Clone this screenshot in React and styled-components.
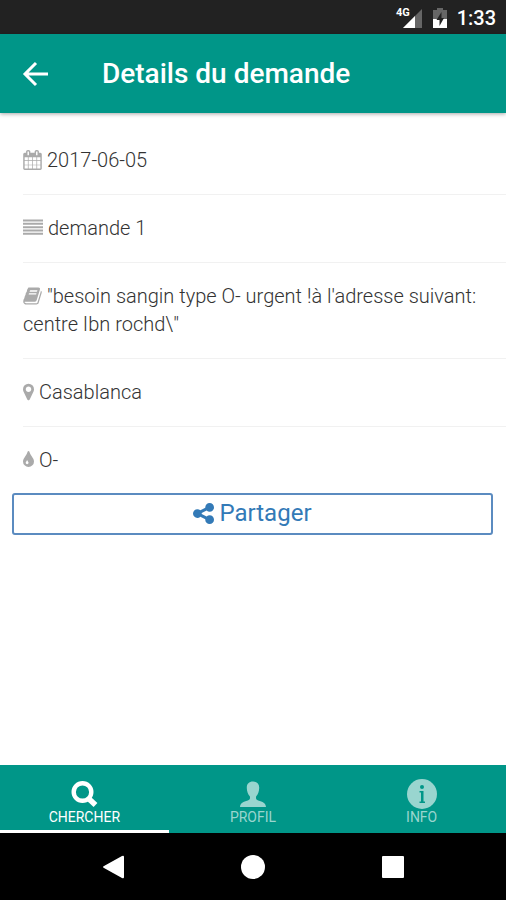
import styled, { createGlobalStyle } from "styled-components"

const GlobalStyle=createGlobalStyle`
*{
box-sizing:border-box;
}
body{
margin:0;
background:#fff;
font-family:Roboto,"Liberation Sans",sans-serif;
}
button{
font-family:inherit;
cursor:pointer;
}
`

const Screen=styled.div`
display:flex;
flex-direction:column;
min-height:100vh;
`

const StatusBar=styled.div`
display:flex;
align-items:center;
justify-content:flex-end;
height:34px;
padding:2px 10px 0;
background:#222;
color:#fff;
`

const Network=styled.svg`
width:28px;
height:24px;
margin-right:10px;
`

const Battery=styled.svg`
width:14px;
height:22px;
margin-right:10px;
`

const Clock=styled.time`
font-size:20px;
font-weight:500;
line-height:24px;
`

const Header=styled.header`
display:flex;
align-items:center;
gap:50px;
height:79px;
padding:0 20px;
background:#009688;
color:#fff;
box-shadow:0 1px 4px rgba(0,0,0,0.35);
`

const BackButton=styled.button`
display:flex;
width:32px;
height:32px;
padding:0;
border:0;
background:none;
color:inherit;
`

const Title=styled.h1`
margin:0;
font-size:28px;
font-weight:500;
line-height:32px;
`

const Content=styled.main`
flex:1;
padding-top:14px;
`

const List=styled.ul`
margin:0;
padding:0 0 0 23px;
list-style:none;
`

const Item=styled.li`
padding:19px 16px 20px 0;
border-bottom:1px solid #f1f1f1;
color:#333;
font-size:20px;
font-weight:300;
line-height:28px;
&:last-child{
padding-bottom:19px;
border-bottom:0;
}
`

const Glyph=styled.svg`
width:${({$width})=>$width}px;
height:${({$height})=>$height||20}px;
margin-right:5px;
vertical-align:-3px;
fill:${({$color})=>$color||"#aaa"};
`

const ShareButton=styled.button`
display:flex;
align-items:center;
justify-content:center;
width:calc(100% - 25px);
height:42px;
margin:0 13px 24px 12px;
padding:0 0 2px;
border:2px solid #5b8bc0;
border-radius:3px;
background:#fff;
color:#337ab7;
font-size:24px;
line-height:36px;
`

const Tabs=styled.nav`
display:grid;
grid-template-columns:repeat(3,1fr);
height:68px;
background:#009688;
`

const Tab=styled.button`
display:flex;
flex-direction:column;
align-items:center;
padding:14px 0 0;
border:0;
border-bottom:3px solid ${({$active})=>$active?"#fff":"transparent"};
background:none;
color:${({$active})=>$active?"#fff":"#99d5cf"};
font-size:14px;
line-height:16px;
svg{
width:32px;
height:30px;
}
`

const NavBar=styled.div`
display:flex;
justify-content:center;
gap:108px;
height:67px;
background:#000;
`

const NavButton=styled.button`
display:flex;
align-items:center;
justify-content:center;
width:32px;
padding:0;
border:0;
background:none;
svg{
width:28px;
height:28px;
fill:#fff;
}
`

const icons={
    calendar:{
        box:"64 0 1664 1792",
        width:19,
        path:"M192 1664h288v-288h-288v288zm352 0h320v-288h-320v288zm-352-352h288v-320h-288v320zm352 0h320v-320h-320v320zm-352-384h288v-288h-288v288zm736 736h320v-288h-320v288zm-384-736h320v-288h-320v288zm768 736h288v-288h-288v288zm-384-352h320v-320h-320v320zm-352-864v-288q0-13-9.5-22.5t-22.5-9.5h-64q-13 0-22.5 9.5t-9.5 22.5v288q0 13 9.5 22.5t22.5 9.5h64q13 0 22.5-9.5t9.5-22.5zm736 864h288v-320h-288v320zm-384-384h320v-288h-320v288zm384 0h288v-288h-288v288zm32-480v-288q0-13-9.5-22.5t-22.5-9.5h-64q-13 0-22.5 9.5t-9.5 22.5v288q0 13 9.5 22.5t22.5 9.5h64q13 0 22.5-9.5t9.5-22.5zm384-64v1280q0 52-38 90t-90 38h-1408q-52 0-90-38t-38-90v-1280q0-52 38-90t90-38h128v-96q0-66 47-113t113-47h64q66 0 113 47t47 113v96h384v-96q0-66 47-113t113-47h64q66 0 113 47t47 113v96h128q52 0 90 38t38 90z",
    },
    lines:{
        box:"0 0 1792 1792",
        width:20,
        path:"M0 130h1792v180h-1792zM0 430h1792v180h-1792zM0 730h1792v180h-1792zM0 1030h1792v180h-1792zM0 1330h1792v180h-1792z",
    },
    book:{
        box:"60 0 1672 1792",
        width:19,
        path:"M1703 478q40 57 18 129l-275 906q-19 64-76.5 107.5t-122.5 43.5h-923q-77 0-148.5-53.5t-99.5-131.5q-24-67-2-127 0-4 3-27t4-37q1-8-3-21.5t-3-19.5q2-11 8-21t16.5-23.5 16.5-23.5q23-38 45-91.5t30-91.5q3-10 .5-30t-.5-28q3-11 17-28t17-23q21-36 42-92t25-90q1-9-2.5-32t.5-28q4-13 22-30.5t22-22.5q19-26 42.5-84.5t27.5-96.5q1-8-3-25.5t-2-26.5q2-8 9-18t18-23 17-21q8-12 16.5-30.5t15-35 16-36 19.5-32 26.5-23.5 36-11.5 47.5 5.5l-1 3q38-9 51-9h761q74 0 114 56t18 130l-274 906q-36 119-71.5 153.5t-128.5 34.5h-869q-27 0-38 15-11 16-1 43 24 70 144 70h923q29 0 56-15.5t35-41.5l300-987q7-22 5-57 38 15 59 43zm-1064 2q-4 13 2 22.5t20 9.5h608q13 0 25.5-9.5t16.5-22.5l21-64q4-13-2-22.5t-20-9.5h-608q-13 0-25.5 9.5t-16.5 22.5zm-83 256q-4 13 2 22.5t20 9.5h608q13 0 25.5-9.5t16.5-22.5l21-64q4-13-2-22.5t-20-9.5h-608q-13 0-25.5 9.5t-16.5 22.5z",
    },
    marker:{
        box:"384 0 1024 1792",
        width:11,
        path:"M1152 640q0-106-75-181t-181-75-181 75-75 181 75 181 181 75 181-75 75-181zm256 0q0 109-33 179l-364 774q-16 33-47.5 52t-67.5 19-67.5-19-46.5-52l-365-774q-33-70-33-179 0-212 150-362t362-150 362 150 150 362z",
    },
    drop:{
        box:"384 0 1024 1792",
        width:11,
        path:"M896 1152q0-36-20-69-1-1-15.5-22.5t-25.5-38-25-44-21-50.5q-4-16-21-16t-21 16q-7 23-21 50.5t-25 44-25.5 38-15.5 22.5q-20 33-20 69 0 53 37.5 90.5t90.5 37.5 90.5-37.5 37.5-90.5zm512-128q0 212-150 362t-362 150-362-150-150-362q0-145 81-275 6-9 62.5-90.5t101-151 99.5-178 83-201.5q9-30 34-47t51-17 51.5 17 33.5 47q28 93 83 201.5t99.5 178 101 151 62.5 90.5q81 127 81 275z",
    },
    share:{
        box:"128 128 1536 1536",
        width:21,
        height:21,
        path:"M1344 1024q133 0 226.5 93.5t93.5 226.5-93.5 226.5-226.5 93.5-226.5-93.5-93.5-226.5q0-12 2-34l-360-180q-92 86-218 86-133 0-226.5-93.5t-93.5-226.5 93.5-226.5 226.5-93.5q126 0 218 86l360-180q-2-22-2-34 0-133 93.5-226.5t226.5-93.5 226.5 93.5 93.5 226.5-93.5 226.5-226.5 93.5q-126 0-218-86l-360 180q2 22 2 34t-2 34l360 180q92-86 218-86z",
    },
}

const details=[
    {icon:"calendar",text:"2017-06-05"},
    {icon:"lines",text:"demande 1"},
    {icon:"book",text:"\"besoin sangin type O- urgent !à l'adresse suivant: centre Ibn rochd\\\""},
    {icon:"marker",text:"Casablanca"},
    {icon:"drop",text:"O-"},
]

const Icon=({name,color})=>{
    const {box,width,height,path}=icons[name]
    return(
        <Glyph viewBox={box} $width={width} $height={height} $color={color} aria-hidden="true">
            <path d={path}/>
        </Glyph>
    )
}

const SearchIcon=()=>(
    <svg viewBox="0 0 32 30" aria-hidden="true">
        <circle cx="14.5" cy="13" r="8.8" fill="none" stroke="currentColor" strokeWidth="4.4"/>
        <path d="M20.5 19.5L27.5 26" stroke="currentColor" strokeWidth="5.6"/>
    </svg>
)

const PersonIcon=()=>(
    <svg viewBox="0 0 32 30" fill="currentColor" aria-hidden="true">
        <path d="M16 2.5C11.8 2.5 9.6 5.2 9.8 9C9.9 12.6 11 15.5 12.8 17.3C13.4 19.4 12.8 20.7 10.8 21.4C6.4 22.8 3.2 23.8 3 28H29C28.8 23.8 25.6 22.8 21.2 21.4C19.2 20.7 18.6 19.4 19.2 17.3C21 15.5 22.1 12.6 22.2 9C22.4 5.2 20.2 2.5 16 2.5Z"/>
    </svg>
)

const InfoIcon=()=>(
    <svg viewBox="0 0 32 30" aria-hidden="true">
        <circle cx="16" cy="15" r="15" fill="currentColor"/>
        <circle cx="16" cy="8" r="2" fill="#009688"/>
        <path d="M13.5 12H17.5V22.5H19V24H13.5V22.5H15V13.5H13.5Z" fill="#009688"/>
    </svg>
)

const App=()=>{
    return(
        <Screen>
            <GlobalStyle/>
            <StatusBar>
                <Network viewBox="0 0 28 24" role="img" aria-label="4G">
                    <path d="M27 3V22H8Z" fill="#666"/>
                    <path d="M20 10V22H8Z" fill="#fff"/>
                    <text x="1" y="10" fill="#fff" stroke="#222" strokeWidth="2" paintOrder="stroke" fontSize="11" fontWeight="700">4G</text>
                </Network>
                <Battery viewBox="0 0 14 22" aria-hidden="true">
                    <path d="M4 1H10V3H14V12H0V3H4Z" fill="#666"/>
                    <path d="M0 12H14V21H0Z" fill="#fff"/>
                    <path d="M8.5 5L3.5 13H6.5V19L11 11H8.5Z" fill="#222"/>
                </Battery>
                <Clock>1:33</Clock>
            </StatusBar>
            <Header>
                <BackButton aria-label="Retour">
                    <svg viewBox="0 0 32 32" width="32" height="32" fill="none" stroke="currentColor" strokeWidth="3" aria-hidden="true">
                        <path d="M28 16H5M16 5L5 16L16 27"/>
                    </svg>
                </BackButton>
                <Title>Details du demande</Title>
            </Header>
            <Content>
                <List>
                    {details.map(({icon,text})=>(
                        <Item key={icon}><Icon name={icon}/>{text}</Item>
                    ))}
                </List>
                <ShareButton><Icon name="share" color="#337ab7"/>Partager</ShareButton>
            </Content>
            <Tabs>
                <Tab $active><SearchIcon/>CHERCHER</Tab>
                <Tab><PersonIcon/>PROFIL</Tab>
                <Tab><InfoIcon/>INFO</Tab>
            </Tabs>
            <NavBar>
                <NavButton aria-label="Précédent">
                    <svg viewBox="0 0 28 28"><path d="M23 3Q25 2 25 4V24Q25 26 23 25L5 15Q3 14 5 13Z"/></svg>
                </NavButton>
                <NavButton aria-label="Accueil">
                    <svg viewBox="0 0 28 28"><circle cx="14" cy="14" r="12"/></svg>
                </NavButton>
                <NavButton aria-label="Applications récentes">
                    <svg viewBox="0 0 28 28"><rect x="3" y="3" width="22" height="22" rx="1"/></svg>
                </NavButton>
            </NavBar>
        </Screen>
    )
}
export default App
